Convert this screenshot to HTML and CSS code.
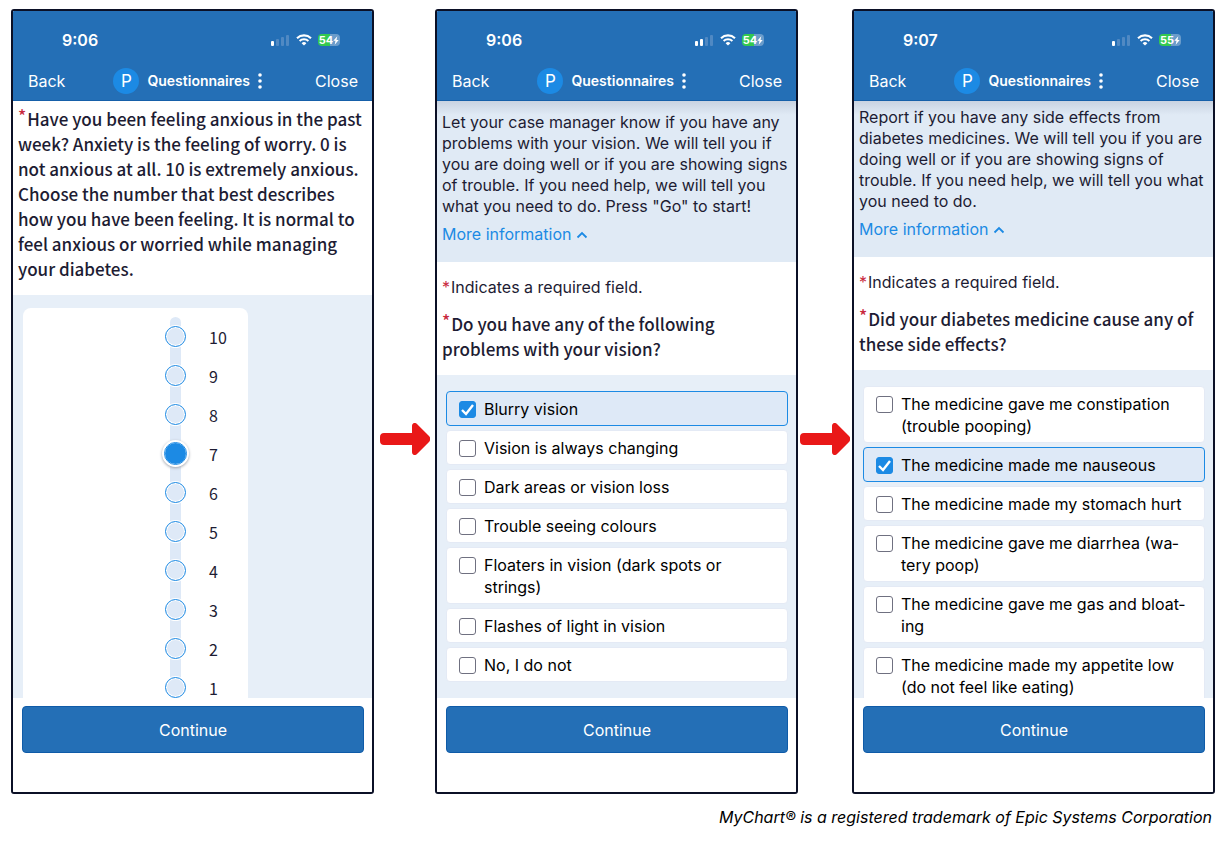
FILE: index.html
```
<!doctype html>
<html lang="en">
	<head>
		<meta charset="utf-8"/>
		<meta name="viewport" content="width=device-width, initial-scale=1"/>
		<title>MyChart Questionnaires</title>

		<link rel="stylesheet" href="styles.css">
	</head>

	<body>
		<!-- Shared icons -->
		<svg class="sprite" aria-hidden="true">
			<symbol id="wifi" viewBox="0 0 16 12">
				<path d="M1 4.2a10.2 10.2 0 0 1 14 0" fill="none" stroke="currentColor" stroke-width="2.1"/>
				<path d="M3.6 7a6.4 6.4 0 0 1 8.8 0" fill="none" stroke="currentColor" stroke-width="2"/>
				<path d="M8 11.6 5.6 9.2a3.5 3.5 0 0 1 4.8 0z" fill="currentColor"/>
			</symbol>
			<symbol id="bolt" viewBox="0 0 7 10">
				<path d="M5 0 0.4 5.4h2.5L2 10l4.6-5.6H4.1z" fill="currentColor"/>
			</symbol>
			<symbol id="dots" viewBox="0 0 4 16">
				<circle cx="2" cy="2" r="1.8" fill="currentColor"/>
				<circle cx="2" cy="8" r="1.8" fill="currentColor"/>
				<circle cx="2" cy="14" r="1.8" fill="currentColor"/>
			</symbol>
			<symbol id="chevron" viewBox="0 0 12 8">
				<path d="M1.5 6.5 6 2l4.500 4.500" fill="none" stroke="currentColor" stroke-width="1.8"/>
			</symbol>
			<symbol id="arrow" viewBox="0 0 50 32">
				<path d="M4 10h28V3c0-3 3-4 5-2l12 12c1.600 1.600 1.600 4 0 6L37 31c-2 2-5 1-5-2v-7H4c-2.500 0-4-1.500-4-4v-4c0-2.500 1.500-4 4-4z" fill="currentColor"/>
			</symbol>
		</svg>

		<main class="steps">
			<section class="phone">
				<header class="top">
					<div class="status">
						<span class="time">9:06</span>
						<span class="signal"><i class="on"></i><i></i><i></i><i></i></span>
						<svg class="wifi"><use href="#wifi"/></svg>
						<span class="battery">54<svg><use href="#bolt"/></svg></span>
					</div>
					<nav class="nav">
						<button type="button">Back</button>
						<div class="title"><span class="avatar">P</span><strong>Questionnaires</strong><button type="button" aria-label="Menu"><svg class="dots"><use href="#dots"/></svg></button></div>
						<button type="button">Close</button>
					</nav>
				</header>
				<div class="screen">
					<h2 class="question first"><sup>*</sup>Have you been feeling anxious in the past week? Anxiety is the feeling of worry. 0 is not anxious at all. 10 is extremely anxious. Choose the number that best describes how you have been feeling. It is normal to feel anxious or worried while managing your diabetes.</h2>
					<div class="answers scale-area">
						<div class="card">
							<div class="scale">
								<label><input type="radio" name="anxiety" value="10">10</label>
								<label><input type="radio" name="anxiety" value="9">9</label>
								<label><input type="radio" name="anxiety" value="8">8</label>
								<label><input type="radio" name="anxiety" value="7" checked>7</label>
								<label><input type="radio" name="anxiety" value="6">6</label>
								<label><input type="radio" name="anxiety" value="5">5</label>
								<label><input type="radio" name="anxiety" value="4">4</label>
								<label><input type="radio" name="anxiety" value="3">3</label>
								<label><input type="radio" name="anxiety" value="2">2</label>
								<label><input type="radio" name="anxiety" value="1">1</label>
							</div>
						</div>
					</div>
				</div>
				<footer class="bottom"><button type="button" class="continue">Continue</button></footer>
			</section>

			<svg class="arrow"><use href="#arrow"/></svg>

			<section class="phone">
				<header class="top">
					<div class="status">
						<span class="time">9:06</span>
						<span class="signal"><i class="on"></i><i class="on"></i><i></i><i></i></span>
						<svg class="wifi"><use href="#wifi"/></svg>
						<span class="battery">54<svg><use href="#bolt"/></svg></span>
					</div>
					<nav class="nav">
						<button type="button">Back</button>
						<div class="title"><span class="avatar">P</span><strong>Questionnaires</strong><button type="button" aria-label="Menu"><svg class="dots"><use href="#dots"/></svg></button></div>
						<button type="button">Close</button>
					</nav>
				</header>
				<div class="screen">
					<div class="intro">
						<p>Let your case manager know if you have any problems with your vision. We will tell you if you are doing well or if you are showing signs of trouble. If you need help, we will tell you what you need to do. Press "Go" to start!</p>
						<a href="#" class="more">More information<svg><use href="#chevron"/></svg></a>
					</div>
					<p class="required"><span>*</span>Indicates a required field.</p>
					<h2 class="question"><sup>*</sup>Do you have any of the following problems with your vision?</h2>
					<div class="answers options">
						<label class="option checked"><input type="checkbox" checked><span>Blurry vision</span></label>
						<label class="option"><input type="checkbox"><span>Vision is always changing</span></label>
						<label class="option"><input type="checkbox"><span>Dark areas or vision loss</span></label>
						<label class="option"><input type="checkbox"><span>Trouble seeing colours</span></label>
						<label class="option"><input type="checkbox"><span>Floaters in vision (dark spots or strings)</span></label>
						<label class="option"><input type="checkbox"><span>Flashes of light in vision</span></label>
						<label class="option"><input type="checkbox"><span>No, I do not</span></label>
					</div>
				</div>
				<footer class="bottom"><button type="button" class="continue">Continue</button></footer>
			</section>

			<svg class="arrow"><use href="#arrow"/></svg>

			<section class="phone">
				<header class="top">
					<div class="status">
						<span class="time">9:07</span>
						<span class="signal"><i class="on"></i><i></i><i></i><i></i></span>
						<svg class="wifi"><use href="#wifi"/></svg>
						<span class="battery">55<svg><use href="#bolt"/></svg></span>
					</div>
					<nav class="nav">
						<button type="button">Back</button>
						<div class="title"><span class="avatar">P</span><strong>Questionnaires</strong><button type="button" aria-label="Menu"><svg class="dots"><use href="#dots"/></svg></button></div>
						<button type="button">Close</button>
					</nav>
				</header>
				<div class="screen">
					<div class="intro scrolled">
						<p>Report if you have any side effects from diabetes medicines. We will tell you if you are doing well or if you are showing signs of trouble. If you need help, we will tell you what you need to do.</p>
						<a href="#" class="more">More information<svg><use href="#chevron"/></svg></a>
					</div>
					<p class="required"><span>*</span>Indicates a required field.</p>
					<h2 class="question"><sup>*</sup>Did your diabetes medicine cause any of these side effects?</h2>
					<div class="answers options">
						<label class="option"><input type="checkbox"><span>The medicine gave me constipation (trouble pooping)</span></label>
						<label class="option checked"><input type="checkbox" checked><span>The medicine made me nauseous</span></label>
						<label class="option"><input type="checkbox"><span>The medicine made my stomach hurt</span></label>
						<label class="option"><input type="checkbox"><span>The medicine gave me diarrhea (wa&shy;tery poop)</span></label>
						<label class="option"><input type="checkbox"><span>The medicine gave me gas and bloat&shy;ing</span></label>
						<label class="option"><input type="checkbox"><span>The medicine made my appetite low (do not feel like eating)</span></label>
					</div>
				</div>
				<footer class="bottom"><button type="button" class="continue">Continue</button></footer>
			</section>
		</main>

		<p class="trademark">MyChart® is a registered trademark of Epic Systems Corporation</p>
	</body>
</html>
```

FILE: styles.css
```
* {
	box-sizing: border-box;
}
body {
	margin: 0;
	background-color: white;
	font-family: Inter, "Liberation Sans", sans-serif;
	font-size: 16px;
	color: #1d1c33;
}
p, h2 {
	margin: 0;
}
button {
	padding: 0;
	border: 0;
	background: none;
	font: inherit;
	color: inherit;
}

.sprite {
	display: block;
	width: 0;
	height: 0;
}

.steps {
	display: grid;
	grid-template-columns: 1fr 61px 1fr 54px 1fr;
	padding: 9px 6px 0 11px;
}
.arrow {
	align-self: center;
	justify-self: center;
	width: 50px;
	height: 32px;
	margin-top: 75px;
	color: #e91818;
}

.phone {
	display: flex;
	flex-direction: column;
	min-width: 0;
	border: 2px solid #0b1026;
	border-radius: 3px;
	overflow: hidden;
}

/* Blue bar */
.top {
	height: 90px;
	background-color: #246fb6;
	border-bottom: 1px solid #1660a9;
	color: white;
}
.status {
	display: flex;
	align-items: center;
	height: 58px;
	padding: 0 32px 0 49px;
}
.time {
	margin-right: auto;
	font-weight: 600;
}
.signal {
	display: flex;
	align-items: flex-end;
	gap: 2px;
	height: 11px;
}
.signal i {
	width: 3px;
	height: 11px;
	border-radius: 1px;
	background-color: #5089c3;
}
.signal i:nth-child(1) {
	height: 5px;
}
.signal i:nth-child(2) {
	height: 7px;
}
.signal i:nth-child(3) {
	height: 9px;
}
.signal i.on {
	background-color: white;
}
.wifi {
	width: 16px;
	height: 12px;
	margin: 0 6px 0 7px;
}
.battery {
	display: flex;
	align-items: center;
	justify-content: center;
	width: 22px;
	height: 12px;
	border-radius: 4px;
	background: linear-gradient(90deg, #34c94f 55%, #6a9ccb 55%);
	font-size: 11px;
	font-weight: 700;
}
.battery svg {
	width: 6px;
	height: 9px;
}

.nav {
	display: flex;
	align-items: center;
	justify-content: space-between;
	height: 23px;
	padding: 0 14px 0 15px;
}
.title {
	display: flex;
	align-items: center;
	margin-right: 5px;
	font-size: 14px;
}
.title strong {
	margin: 0 8px;
	font-weight: 600;
}
.avatar {
	width: 26px;
	border-radius: 50%;
	background-color: #1c8ae4;
	font-size: 17px;
	line-height: 26px;
	text-align: center;
}
.dots {
	display: block;
	width: 4px;
	height: 16px;
}

.screen {
	height: 597px;
	overflow: hidden;
}

.intro {
	padding: 11px 4px 17px 5px;
	background-color: #e0eaf5;
	background-image: linear-gradient(#c9d3e1, #e0eaf5 14px);
	line-height: 21px;
}
.intro.scrolled {
	padding-top: 6px;
}
.more {
	display: inline-flex;
	align-items: center;
	gap: 5px;
	margin-top: 7px;
	color: #1c8ae4;
	text-decoration: none;
	vertical-align: top;
}
.more svg {
	width: 12px;
	height: 8px;
}
.required {
	padding: 15px 5px 0;
	line-height: 21px;
}
.required span, sup {
	color: #c8283c;
}
.required span {
	margin-right: 1px;
}
.question {
	padding: 13px 4px 14px 5px;
	font-family: "Noto Sans CJK SC", sans-serif;
	font-size: 17px;
	font-weight: 500;
	line-height: 25px;
}
.question.first {
	padding-top: 5px;
}
sup {
	margin-right: 1px;
	font-size: 17px;
	line-height: 0;
	vertical-align: 3px;
}
.answers {
	min-height: 100%;
	background-color: #e7eff8;
}

/* 1 - 10 scale */
.scale-area {
	padding: 13px 10px;
}
.card {
	width: 225px;
	padding: 9px 0 20px 142px;
	border-radius: 8px;
	background-color: white;
}
.scale {
	position: relative;
	padding-bottom: 20px;
}
.scale::before {
	content: "";
	position: absolute;
	top: 0;
	bottom: 0;
	left: 5px;
	width: 11px;
	border-radius: 6px;
	background-color: #dee9f7;
}
.scale label {
	position: relative;
	display: flex;
	align-items: center;
	height: 39px;
	font-family: "Noto Sans CJK SC", sans-serif;
	line-height: 20px;
}
.scale input {
	appearance: none;
	width: 21px;
	height: 21px;
	margin: 0 23px 0 0;
	border: 1px solid #1c8ae4;
	border-radius: 50%;
	background-color: #dee9f7;
	box-shadow: inset 0 0 0 1px white, 0 0 0 1px white;
}
.scale input:checked {
	border: 0;
	outline: 1px solid #1c8ae4;
	background-color: #1c8ae4;
	box-shadow: 0 0 0 3px white, 0 1px 3px 3px #a0a4ac;
}

/* Tick box list */
.options {
	display: flex;
	flex-direction: column;
	gap: 4px;
	padding: 16px 8px 16px 9px;
}
.option {
	display: flex;
	gap: 8px;
	padding: 6px 12px 5px;
	border: 1px solid #e4eaf5;
	border-radius: 4px;
	background-color: white;
	color: black;
	line-height: 22px;
}
.option.checked {
	border-color: #1c8ae4;
	background-color: #dee9f7;
}
.option input {
	appearance: none;
	flex: none;
	width: 17px;
	height: 17px;
	margin: 3px 0 0;
	border: 1px solid #6f7080;
	border-radius: 3px;
	background-color: white;
}
.option input:checked {
	border-color: #1c8ae4;
	background: #1c8ae4 url("data:image/svg+xml,%3Csvg xmlns='http://www.w3.org/2000/svg' viewBox='0 0 15 15'%3E%3Cpath d='M2 8l4 4 7-9' fill='none' stroke='white' stroke-width='2.4'/%3E%3C/svg%3E") center no-repeat;
}

.bottom {
	padding: 8px 8px 39px 9px;
	background-color: white;
}
.continue {
	display: block;
	width: 100%;
	height: 47px;
	border: 1px solid #0f5ba8;
	border-radius: 4px;
	background-color: #246fb6;
	color: white;
}

.trademark {
	padding: 12px 9px;
	color: black;
	font-style: italic;
	line-height: 22px;
	text-align: right;
}
```
